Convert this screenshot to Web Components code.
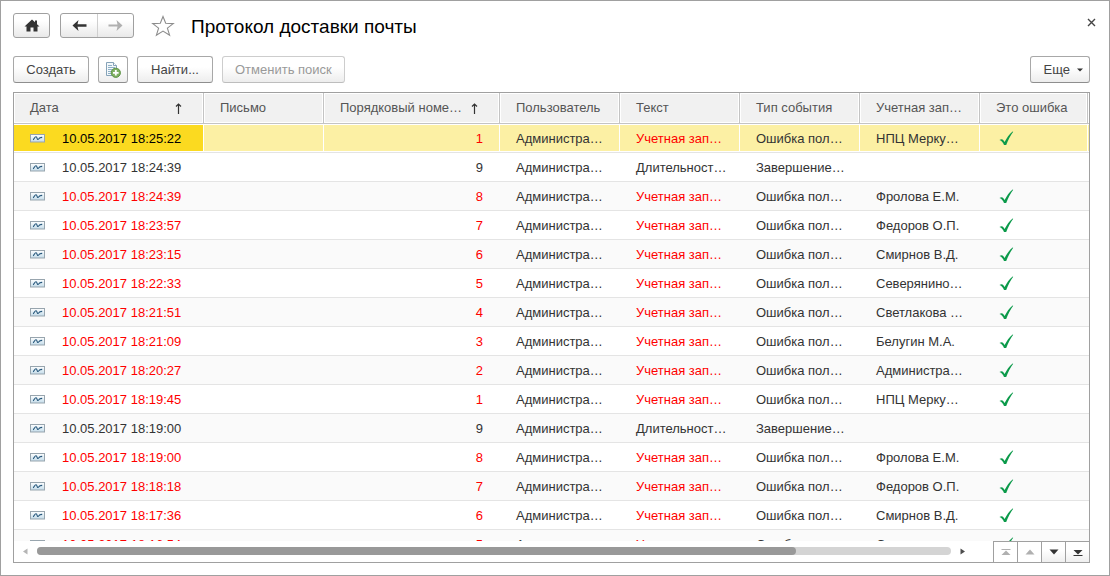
<!DOCTYPE html>
<html lang="ru">
<head>
<meta charset="utf-8">
<title>Протокол доставки почты</title>
<style>
  html, body { height: 100%; margin: 0; }
  body { background: #fff; font: 13px/16px "Liberation Sans", Arial, sans-serif; color: #333; }
</style>
</head>
<body>
<mail-log-window>
  <span slot="title">Протокол доставки почты</span>
  <ui-button slot="actions">Создать</ui-button>
  <ui-button slot="actions" icon="copy" label="Создать копированием"></ui-button>
  <ui-button slot="actions">Найти...</ui-button>
  <ui-button slot="actions" disabled>Отменить поиск</ui-button>
  <ui-button slot="more" caret>Еще</ui-button>
  <log-table></log-table>
</mail-log-window>

<script>
const ICONS = {
  home: [16, 13, '<path d="M8 0.5 L0.5 7.5 H2.5 V12.5 H6.5 V8.5 H9.5 V12.5 H13.5 V7.5 H15.5 L13 5.2 V1.5 H11 V3.3 Z" fill="#333"/>'],
  back: [15, 11, '<path d="M6.5 0 L0.5 5.5 L6.5 11 L5.5 6.8 H14.5 V4.3 H5.5 Z" fill="#333"/>'],
  forward: [15, 11, '<path d="M8.5 0 L14.5 5.5 L8.5 11 L9.5 6.5 H0.5 V4.5 H9.5 Z" fill="#b0b0b0"/>'],
  star: [24, 22, '<path d="M12 1.5 L14.7 8.3 L22.3 8.6 L16.4 13.1 L18.6 20.2 L12 16.1 L5.4 20.2 L7.6 13.1 L1.7 8.6 L9.3 8.3 Z" fill="#fff" stroke="#8c8c8c" stroke-width="1.1"/>'],
  close: [9, 9, '<path d="M1 1 L8 8 M8 1 L1 8" stroke="#444" stroke-width="1.4"/>'],
  copy: [16, 16, '<path d="M1.5 0.5 H8.5 L11.5 3.5 V13.5 H1.5 Z" fill="#f3f8fb" stroke="#86a3b8"/><path d="M8.5 0.5 V3.5 H11.5" fill="#fff" stroke="#86a3b8"/><path d="M3 3.5 H7 M3 5.5 H10 M3 7.5 H8 M3 9.5 H6 M3 11.5 H6" stroke="#8fb0c6"/><circle cx="10.8" cy="10.8" r="4.6" fill="#7fb062" stroke="#5c9244"/><path d="M10.8 8 V13.6 M8 10.8 H13.6" stroke="#fff" stroke-width="1.8"/>'],
  caret: [6, 4, '<path d="M0 0.5 H6 L3 3.5 Z" fill="#333"/>'],
  sort: [7, 11, '<path d="M3.5 11 V1 M1 3.5 L3.5 1 L6 3.5" fill="none" stroke="#333" stroke-width="1.2"/>'],
  record: [15, 11, '<defs><linearGradient id="g" x2="0" y2="1"><stop offset="0" stop-color="#fff"/><stop offset="1" stop-color="#c3dcea"/></linearGradient></defs><rect x="0.5" y="0.5" width="14" height="7.5" fill="url(#g)" stroke="#98a5ae"/><path d="M3 5.8 C4.2 5.6 4.6 2.6 6 2.8 C7.4 3 6.8 5.6 8 5.4 C9 5.2 9.4 3.6 10.4 3.6 L12.2 3.4" fill="none" stroke="#24557a" stroke-width="1.1"/>'],
  check: [15, 17, '<path d="M0.5 9 C2 7.8 3.4 8 4.2 9 L5.6 11 C7.6 7 10.2 3.2 13.6 0.4 L14.2 0.8 C11.4 4.6 9 9.4 7.2 14 H5 C4 11.6 2.8 9.8 0.5 9 Z" fill="#0b9a4a"/>'],
  left: [5, 7, '<path d="M4.5 0.5 V6.5 L0 3.5 Z" fill="#b5b5b5"/>'],
  right: [5, 7, '<path d="M0.5 0.5 V6.5 L5 3.5 Z" fill="#4d4d4d"/>'],
  first: [10, 7, '<path d="M0.5 0.5 H9.5" stroke="#b0b0b0"/><path d="M5 1.5 L9.5 6 H0.5 Z" fill="#b0b0b0"/>'],
  up: [10, 6, '<path d="M5 0.5 L9.5 5.5 H0.5 Z" fill="#b0b0b0"/>'],
  down: [10, 6, '<path d="M5 5.5 L9.5 0.5 H0.5 Z" fill="#333"/>'],
  last: [10, 7, '<path d="M0.5 6.5 H9.5" stroke="#333"/><path d="M5 5.5 L9.5 1 H0.5 Z" fill="#333"/>']
};

class UiIcon extends HTMLElement {
  connectedCallback() {
    if (this.shadowRoot) return;
    const [w, h, body] = ICONS[this.getAttribute('name')];
    this.attachShadow({ mode: 'open' }).innerHTML =
      `<style>:host{display:inline-block;flex:none;line-height:0}svg{display:block}</style>
       <svg width="${w}" height="${h}" viewBox="0 0 ${w} ${h}" aria-hidden="true">${body}</svg>`;
  }
}
customElements.define('ui-icon', UiIcon);

class UiButton extends HTMLElement {
  connectedCallback() {
    if (this.shadowRoot) return;
    const icon = this.getAttribute('icon');
    const label = this.getAttribute('label');
    const caret = this.hasAttribute('caret');
    this.attachShadow({ mode: 'open' }).innerHTML = `
      <style>
        :host { display: block; }
        button {
          display: flex; align-items: center; justify-content: center; gap: 6px;
          box-sizing: border-box; height: 27px; margin: 0; padding: 0 12px;
          border: 1px solid #a8a8a8; border-bottom-color: #8e8e8e; border-radius: 3px;
          background: linear-gradient(#fff 40%, #ededed);
          font: inherit; color: #444; white-space: nowrap;
        }
        button.text { min-width: 76px; }
        button.icon { padding: 0 6px; }
        button.caret { padding: 0 6px 0 13px; gap: 7px; }
        button:disabled { border-color: #cdcdcd; border-bottom-color: #bdbdbd; color: #999; }
      </style>
      <button type="button" class="${icon ? 'icon' : caret ? 'caret' : 'text'}"
        ${label ? `aria-label="${label}"` : ''} ${this.hasAttribute('disabled') ? 'disabled' : ''}>
        ${icon ? `<ui-icon name="${icon}"></ui-icon>` : '<slot></slot>'}
        ${caret ? '<ui-icon name="caret"></ui-icon>' : ''}
      </button>`;
  }
}
customElements.define('ui-button', UiButton);

class NavButtons extends HTMLElement {
  connectedCallback() {
    if (this.shadowRoot) return;
    this.attachShadow({ mode: 'open' }).innerHTML = `
      <style>
        :host { display: flex; gap: 10px; }
        .group {
          display: flex; box-sizing: border-box; height: 25px; overflow: hidden;
          border: 1px solid #a0a0a0; border-radius: 3px;
          background: linear-gradient(#fff 30%, #e9e9e9);
        }
        button {
          display: flex; align-items: center; justify-content: center;
          width: 36px; margin: 0; padding: 0; border: 0; background: none;
        }
        .home { width: 35px; }
        button + button { border-left: 1px solid #cfcfcf; }
      </style>
      <div class="group"><button class="home" type="button" aria-label="Домой"><ui-icon name="home"></ui-icon></button></div>
      <div class="group">
        <button type="button" aria-label="Назад"><ui-icon name="back"></ui-icon></button>
        <button type="button" aria-label="Вперед" disabled><ui-icon name="forward"></ui-icon></button>
      </div>`;
  }
}
customElements.define('nav-buttons', NavButtons);

class MailLogWindow extends HTMLElement {
  connectedCallback() {
    if (this.shadowRoot) return;
    this.attachShadow({ mode: 'open' }).innerHTML = `
      <style>
        :host {
          display: flex; flex-direction: column; box-sizing: border-box;
          height: 100vh; border: 1px solid #a0a0a0; background: #fff;
        }
        header { display: flex; align-items: center; padding: 11px 8px 0 12px; }
        .star { margin-left: 17px; }
        h1 { flex: 1; margin: 0 0 0 16px; padding-top: 2px; font-size: 19px; line-height: 25px; font-weight: 400; color: #000; }
        .plain {
          display: flex; align-items: center; justify-content: center;
          padding: 0; border: 0; background: none;
        }
        .close { width: 20px; height: 20px; align-self: flex-start; }
        .bar { display: flex; justify-content: space-between; padding: 17px 19px 9px 12px; }
        .actions { display: flex; gap: 9px; }
        main { flex: 1; min-height: 0; display: flex; padding: 0 19px 12px 12px; }
        main ::slotted(*) { flex: 1; min-width: 0; }
      </style>
      <header>
        <nav-buttons></nav-buttons>
        <button class="plain star" type="button" aria-label="Избранное"><ui-icon name="star"></ui-icon></button>
        <h1><slot name="title"></slot></h1>
        <button class="plain close" type="button" aria-label="Закрыть"><ui-icon name="close"></ui-icon></button>
      </header>
      <div class="bar">
        <div class="actions"><slot name="actions"></slot></div>
        <slot name="more"></slot>
      </div>
      <main><slot></slot></main>`;
  }
}
customElements.define('mail-log-window', MailLogWindow);

class ScrollFooter extends HTMLElement {
  connectedCallback() {
    if (this.shadowRoot) return;
    this.attachShadow({ mode: 'open' }).innerHTML = `
      <style>
        :host { display: flex; height: 21px; background: #fff; }
        button {
          display: flex; align-items: center; justify-content: center; box-sizing: border-box;
          margin: 0; padding: 0; border: 0; background: none;
        }
        .arrow { width: 23px; }
        .track { flex: 1; margin: 6px 0 7px; border-radius: 4px; background: #d4d4d4; }
        .thumb { width: 83%; height: 8px; border-radius: 4px; background: #999; }
        .pager { display: flex; margin-left: 19px; }
        .pager button { width: 24px; border: solid #a0a0a0; border-width: 1px 0 0 1px; background: linear-gradient(#fff 40%, #efefef); }
        .pager button:disabled { background: #fff; }
      </style>
      <button class="arrow" type="button" aria-label="Влево" disabled><ui-icon name="left"></ui-icon></button>
      <div class="track"><div class="thumb"></div></div>
      <button class="arrow" type="button" aria-label="Вправо"><ui-icon name="right"></ui-icon></button>
      <div class="pager">
        <button type="button" aria-label="В начало" disabled><ui-icon name="first"></ui-icon></button>
        <button type="button" aria-label="Вверх" disabled><ui-icon name="up"></ui-icon></button>
        <button type="button" aria-label="Вниз"><ui-icon name="down"></ui-icon></button>
        <button type="button" aria-label="В конец"><ui-icon name="last"></ui-icon></button>
      </div>`;
  }
}
customElements.define('scroll-footer', ScrollFooter);

// time, sequence number, account; a record with no account is a completed session
const RECORDS = [
  ['18:25:22', 1, 'НПЦ Мерку…'],
  ['18:24:39', 9, ''],
  ['18:24:39', 8, 'Фролова Е.М.'],
  ['18:23:57', 7, 'Федоров О.П.'],
  ['18:23:15', 6, 'Смирнов В.Д.'],
  ['18:22:33', 5, 'Северянино…'],
  ['18:21:51', 4, 'Светлакова …'],
  ['18:21:09', 3, 'Белугин М.А.'],
  ['18:20:27', 2, 'Администра…'],
  ['18:19:45', 1, 'НПЦ Мерку…'],
  ['18:19:00', 9, ''],
  ['18:19:00', 8, 'Фролова Е.М.'],
  ['18:18:18', 7, 'Федоров О.П.'],
  ['18:17:36', 6, 'Смирнов В.Д.'],
  ['18:16:54', 5, 'Северянино…']
];

class LogTable extends HTMLElement {
  connectedCallback() {
    if (this.shadowRoot) return;
    const rows = RECORDS.map(([time, num, account], i) => `
      <tr class="${account ? 'error' : ''} ${i === 0 ? 'selected' : ''}">
        <td class="date"><div><ui-icon name="record"></ui-icon><span>10.05.2017 ${time}</span></div></td>
        <td></td>
        <td class="num">${num}</td>
        <td>Администра…</td>
        <td class="msg">${account ? 'Учетная зап…' : 'Длительност…'}</td>
        <td>${account ? 'Ошибка пол…' : 'Завершение…'}</td>
        <td>${account}</td>
        <td class="flag">${account ? '<ui-icon name="check" role="img" aria-label="Да"></ui-icon>' : ''}</td>
        <td class="rest"></td>
      </tr>`).join('');
    this.attachShadow({ mode: 'open' }).innerHTML = `
      <style>
        :host { display: flex; flex-direction: column; border: 1px solid #a0a0a0; }
        .view { flex: 1; min-height: 0; overflow: hidden; }
        table { width: 100%; table-layout: fixed; border-collapse: separate; border-spacing: 0; }
        th, td { box-sizing: border-box; padding: 0 0 0 16px; white-space: nowrap; overflow: hidden; text-align: left; font-weight: 400; }
        th { height: 31px; background: #f1f1f1; color: #555; border: solid #c4c4c4; border-width: 0 1px 1px 0; box-shadow: inset 0 0 0 1px #fff; }
        th div { display: flex; align-items: center; justify-content: space-between; padding-right: 21px; }
        td { height: 29px; padding-top: 2px; border: solid #e4e4e4; border-width: 0 0 1px 0; }
        th.rest, td.rest { padding: 0; border-right: 0; }
        tbody tr:nth-child(odd) td { background: #fafafa; }
        tbody tr.selected td {
          background: #fcf0a4; box-shadow: inset 0 1px #fff, inset 0 -1px #fff, inset -1px 0 #fff;
        }
        tbody tr.selected td.date { background: #fbda20; }
        tbody tr.selected td.rest { box-shadow: inset 0 1px #fff, inset 0 -1px #fff; }
        .date div { display: flex; align-items: center; gap: 17px; }
        .num { text-align: right; padding-right: 17px; }
        .error .date, .error .num, .error .msg { color: #f00; }
        .error.selected .date { color: #000; }
        .flag { padding-left: 19px; }
        .flag ui-icon { display: block; }
      </style>
      <div class="view">
        <table>
          <colgroup>
            <col style="width:190px"><col style="width:120px"><col style="width:176px"><col style="width:120px">
            <col style="width:120px"><col style="width:120px"><col style="width:120px"><col style="width:108px"><col>
          </colgroup>
          <thead><tr>
            <th><div>Дата<ui-icon name="sort"></ui-icon></div></th>
            <th>Письмо</th>
            <th><div>Порядковый номе…<ui-icon name="sort"></ui-icon></div></th>
            <th>Пользователь</th><th>Текст</th><th>Тип события</th><th>Учетная зап…</th><th>Это ошибка</th>
            <th class="rest"></th>
          </tr></thead>
          <tbody>${rows}</tbody>
        </table>
      </div>
      <scroll-footer></scroll-footer>`;
  }
}
customElements.define('log-table', LogTable);
</script>
</body>
</html>
